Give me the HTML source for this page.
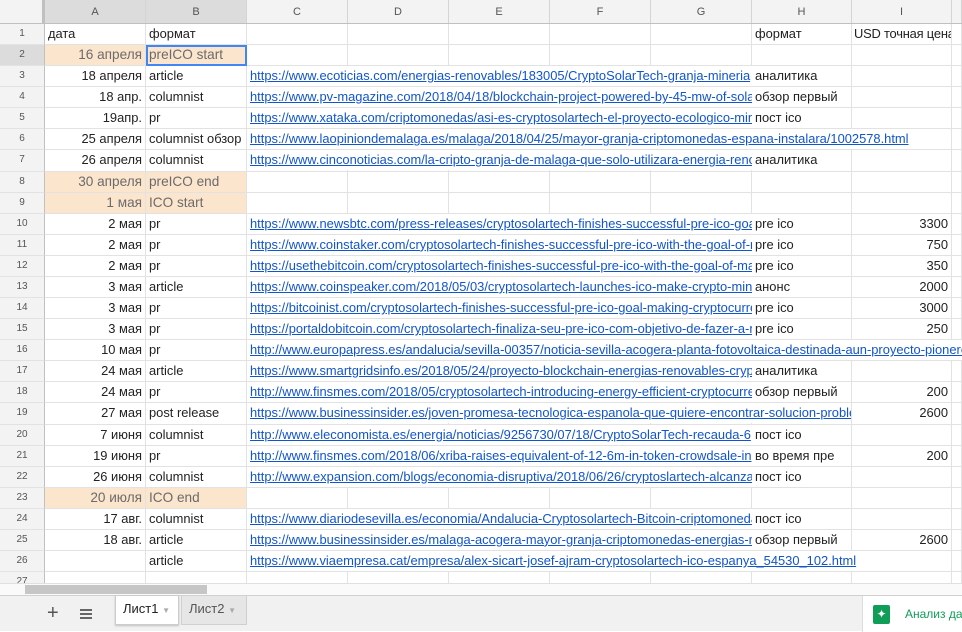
<!DOCTYPE html>
<html><head><meta charset="utf-8"><style>
*{box-sizing:border-box;margin:0;padding:0}
body{width:962px;height:631px;overflow:hidden;background:#fff;font-family:"Liberation Sans",Arial,sans-serif;font-size:12.9px;color:#222;position:relative}
.hdr{position:absolute;top:0;left:0;height:24px;width:962px;display:flex;background:#f3f3f3;border-bottom:1px solid #c0c0c0}
.hdr div{border-right:1px solid #d4d4d4;text-align:center;line-height:24px;font-size:11px;color:#555;flex:none}
.row{position:absolute;left:0;height:21.08px;width:962px;display:flex}
.row>div{flex:none;border-right:1px solid #e2e2e2;border-bottom:1px solid #e2e2e2;height:100%;line-height:20px;white-space:nowrap;overflow:hidden;padding:0 3px}
.rh{width:45px;background:#f3f3f3;text-align:center;font-size:10px;color:#555;border-right:1px solid #c0c0c0 !important}
.a{width:101px;text-align:right}.b{width:101px}.c{width:101px;position:relative;overflow:visible !important}
.d,.e,.f,.g{width:101px}.h{width:100px}.i{width:100px;text-align:right}.j{width:10px}
.o{background:#fce5cd;color:#6b6b6b;font-size:13.6px}
.lk{position:absolute;left:0;top:0;height:20px;background:#fff;color:#1155cc;text-decoration:underline;padding-left:3px;overflow:hidden;white-space:nowrap;z-index:2;line-height:20px}
.bar{position:absolute;left:0;top:595px;width:962px;height:36px;background:#f1f1f1;border-top:1px solid #d0d0d0}
</style></head><body>
<div class="hdr"><div style="width:45px;border-right:3px solid #c0c0c0"></div><div style="width:101px;background:#dcdcdc">A</div><div style="width:101px;background:#dcdcdc">B</div><div style="width:101px">C</div><div style="width:101px">D</div><div style="width:101px">E</div><div style="width:101px">F</div><div style="width:101px">G</div><div style="width:100px">H</div><div style="width:100px">I</div><div style="width:10px"></div></div>

<div class="row" style="top:24px"><div class="rh">1</div><div class="a" style="text-align:left">дата</div><div class="b">формат</div><div class="c"></div><div class="d"></div><div class="e"></div><div class="f"></div><div class="g"></div><div class="h">формат</div><div class="i" style="text-align:left;padding:0 0 0 2px;letter-spacing:-0.2px">USD точная цена</div><div class="j"></div></div>
<div class="row" style="top:45.08px"><div class="rh" style="background:#dcdcdc">2</div><div class="a o">16 апреля</div><div class="b o" style="outline:2px solid #4285f4;outline-offset:-2px">preICO start</div><div class="c"></div><div class="d"></div><div class="e"></div><div class="f"></div><div class="g"></div><div class="h"></div><div class="i"></div><div class="j"></div></div>
<div class="row" style="top:66.16px"><div class="rh">3</div><div class="a">18 апреля</div><div class="b">article</div><div class="c"><span class="lk" style="width:505px">https://www.ecoticias.com/energias-renovables/183005/CryptoSolarTech-granja-mineria</span></div><div class="d"></div><div class="e"></div><div class="f"></div><div class="g"></div><div class="h">аналитика</div><div class="i"></div><div class="j"></div></div>
<div class="row" style="top:87.24px"><div class="rh">4</div><div class="a">18 апр.</div><div class="b">columnist</div><div class="c"><span class="lk" style="width:505px">https://www.pv-magazine.com/2018/04/18/blockchain-project-powered-by-45-mw-of-solar</span></div><div class="d"></div><div class="e"></div><div class="f"></div><div class="g"></div><div class="h">обзор первый</div><div class="i"></div><div class="j"></div></div>
<div class="row" style="top:108.32px"><div class="rh">5</div><div class="a">19апр.</div><div class="b">pr</div><div class="c"><span class="lk" style="width:505px">https://www.xataka.com/criptomonedas/asi-es-cryptosolartech-el-proyecto-ecologico-minar</span></div><div class="d"></div><div class="e"></div><div class="f"></div><div class="g"></div><div class="h">пост ico</div><div class="i"></div><div class="j"></div></div>
<div class="row" style="top:129.4px"><div class="rh">6</div><div class="a">25 апреля</div><div class="b">columnist обзор</div><div class="c"><span class="lk" style="width:700px">https://www.laopiniondemalaga.es/malaga/2018/04/25/mayor-granja-criptomonedas-espana-instalara/1002578.html</span></div><div class="d"></div><div class="e"></div><div class="f"></div><div class="g"></div><div class="h"></div><div class="i"></div><div class="j"></div></div>
<div class="row" style="top:150.48px"><div class="rh">7</div><div class="a">26 апреля</div><div class="b">columnist</div><div class="c"><span class="lk" style="width:505px">https://www.cinconoticias.com/la-cripto-granja-de-malaga-que-solo-utilizara-energia-renovable</span></div><div class="d"></div><div class="e"></div><div class="f"></div><div class="g"></div><div class="h">аналитика</div><div class="i"></div><div class="j"></div></div>
<div class="row" style="top:171.56px"><div class="rh">8</div><div class="a o">30 апреля</div><div class="b o">preICO end</div><div class="c"></div><div class="d"></div><div class="e"></div><div class="f"></div><div class="g"></div><div class="h"></div><div class="i"></div><div class="j"></div></div>
<div class="row" style="top:192.64px"><div class="rh">9</div><div class="a o">1 мая</div><div class="b o">ICO start</div><div class="c"></div><div class="d"></div><div class="e"></div><div class="f"></div><div class="g"></div><div class="h"></div><div class="i"></div><div class="j"></div></div>
<div class="row" style="top:213.72px"><div class="rh">10</div><div class="a">2 мая</div><div class="b">pr</div><div class="c"><span class="lk" style="width:505px">https://www.newsbtc.com/press-releases/cryptosolartech-finishes-successful-pre-ico-goal</span></div><div class="d"></div><div class="e"></div><div class="f"></div><div class="g"></div><div class="h">pre ico</div><div class="i">3300</div><div class="j"></div></div>
<div class="row" style="top:234.8px"><div class="rh">11</div><div class="a">2 мая</div><div class="b">pr</div><div class="c"><span class="lk" style="width:505px">https://www.coinstaker.com/cryptosolartech-finishes-successful-pre-ico-with-the-goal-of-making</span></div><div class="d"></div><div class="e"></div><div class="f"></div><div class="g"></div><div class="h">pre ico</div><div class="i">750</div><div class="j"></div></div>
<div class="row" style="top:255.88px"><div class="rh">12</div><div class="a">2 мая</div><div class="b">pr</div><div class="c"><span class="lk" style="width:505px">https://usethebitcoin.com/cryptosolartech-finishes-successful-pre-ico-with-the-goal-of-making</span></div><div class="d"></div><div class="e"></div><div class="f"></div><div class="g"></div><div class="h">pre ico</div><div class="i">350</div><div class="j"></div></div>
<div class="row" style="top:276.96px"><div class="rh">13</div><div class="a">3 мая</div><div class="b">article</div><div class="c"><span class="lk" style="width:505px">https://www.coinspeaker.com/2018/05/03/cryptosolartech-launches-ico-make-crypto-mining</span></div><div class="d"></div><div class="e"></div><div class="f"></div><div class="g"></div><div class="h">анонс</div><div class="i">2000</div><div class="j"></div></div>
<div class="row" style="top:298.04px"><div class="rh">14</div><div class="a">3 мая</div><div class="b">pr</div><div class="c"><span class="lk" style="width:505px">https://bitcoinist.com/cryptosolartech-finishes-successful-pre-ico-goal-making-cryptocurrency</span></div><div class="d"></div><div class="e"></div><div class="f"></div><div class="g"></div><div class="h">pre ico</div><div class="i">3000</div><div class="j"></div></div>
<div class="row" style="top:319.12px"><div class="rh">15</div><div class="a">3 мая</div><div class="b">pr</div><div class="c"><span class="lk" style="width:505px">https://portaldobitcoin.com/cryptosolartech-finaliza-seu-pre-ico-com-objetivo-de-fazer-a-mineracao</span></div><div class="d"></div><div class="e"></div><div class="f"></div><div class="g"></div><div class="h">pre ico</div><div class="i">250</div><div class="j"></div></div>
<div class="row" style="top:340.2px"><div class="rh">16</div><div class="a">10 мая</div><div class="b">pr</div><div class="c"><span class="lk" style="width:715px">http://www.europapress.es/andalucia/sevilla-00357/noticia-sevilla-acogera-planta-fotovoltaica-destinada-aun-proyecto-pionero</span></div><div class="d"></div><div class="e"></div><div class="f"></div><div class="g"></div><div class="h"></div><div class="i"></div><div class="j"></div></div>
<div class="row" style="top:361.28px"><div class="rh">17</div><div class="a">24 мая</div><div class="b">article</div><div class="c"><span class="lk" style="width:505px">https://www.smartgridsinfo.es/2018/05/24/proyecto-blockchain-energias-renovables-cryptosolar</span></div><div class="d"></div><div class="e"></div><div class="f"></div><div class="g"></div><div class="h">аналитика</div><div class="i"></div><div class="j"></div></div>
<div class="row" style="top:382.36px"><div class="rh">18</div><div class="a">24 мая</div><div class="b">pr</div><div class="c"><span class="lk" style="width:505px">http://www.finsmes.com/2018/05/cryptosolartech-introducing-energy-efficient-cryptocurrency</span></div><div class="d"></div><div class="e"></div><div class="f"></div><div class="g"></div><div class="h">обзор первый</div><div class="i">200</div><div class="j"></div></div>
<div class="row" style="top:403.44px"><div class="rh">19</div><div class="a">27 мая</div><div class="b">post release</div><div class="c"><span class="lk" style="width:604px">https://www.businessinsider.es/joven-promesa-tecnologica-espanola-que-quiere-encontrar-solucion-problema</span></div><div class="d"></div><div class="e"></div><div class="f"></div><div class="g"></div><div class="h"></div><div class="i">2600</div><div class="j"></div></div>
<div class="row" style="top:424.52px"><div class="rh">20</div><div class="a">7 июня</div><div class="b">columnist</div><div class="c"><span class="lk" style="width:505px">http://www.eleconomista.es/energia/noticias/9256730/07/18/CryptoSolarTech-recauda-6</span></div><div class="d"></div><div class="e"></div><div class="f"></div><div class="g"></div><div class="h">пост ico</div><div class="i"></div><div class="j"></div></div>
<div class="row" style="top:445.6px"><div class="rh">21</div><div class="a">19 июня</div><div class="b">pr</div><div class="c"><span class="lk" style="width:505px">http://www.finsmes.com/2018/06/xriba-raises-equivalent-of-12-6m-in-token-crowdsale-in</span></div><div class="d"></div><div class="e"></div><div class="f"></div><div class="g"></div><div class="h">во время пре</div><div class="i">200</div><div class="j"></div></div>
<div class="row" style="top:466.68px"><div class="rh">22</div><div class="a">26 июня</div><div class="b">columnist</div><div class="c"><span class="lk" style="width:505px">http://www.expansion.com/blogs/economia-disruptiva/2018/06/26/cryptoslartech-alcanza</span></div><div class="d"></div><div class="e"></div><div class="f"></div><div class="g"></div><div class="h">пост ico</div><div class="i"></div><div class="j"></div></div>
<div class="row" style="top:487.76px"><div class="rh">23</div><div class="a o">20 июля</div><div class="b o">ICO end</div><div class="c"></div><div class="d"></div><div class="e"></div><div class="f"></div><div class="g"></div><div class="h"></div><div class="i"></div><div class="j"></div></div>
<div class="row" style="top:508.84px"><div class="rh">24</div><div class="a">17 авг.</div><div class="b">columnist</div><div class="c"><span class="lk" style="width:505px">https://www.diariodesevilla.es/economia/Andalucia-Cryptosolartech-Bitcoin-criptomonedas</span></div><div class="d"></div><div class="e"></div><div class="f"></div><div class="g"></div><div class="h">пост ico</div><div class="i"></div><div class="j"></div></div>
<div class="row" style="top:529.92px"><div class="rh">25</div><div class="a">18 авг.</div><div class="b">article</div><div class="c"><span class="lk" style="width:505px">https://www.businessinsider.es/malaga-acogera-mayor-granja-criptomonedas-energias-renovables</span></div><div class="d"></div><div class="e"></div><div class="f"></div><div class="g"></div><div class="h">обзор первый</div><div class="i">2600</div><div class="j"></div></div>
<div class="row" style="top:551px"><div class="rh">26</div><div class="a"></div><div class="b">article</div><div class="c"><span class="lk" style="width:700px">https://www.viaempresa.cat/empresa/alex-sicart-josef-ajram-cryptosolartech-ico-espanya_54530_102.html</span></div><div class="d"></div><div class="e"></div><div class="f"></div><div class="g"></div><div class="h"></div><div class="i"></div><div class="j"></div></div>
<div class="row" style="top:572.08px"><div class="rh">27</div><div class="a"></div><div class="b"></div><div class="c"></div><div class="d"></div><div class="e"></div><div class="f"></div><div class="g"></div><div class="h"></div><div class="i"></div><div class="j"></div></div>

<div style="position:absolute;left:0;top:583px;width:962px;height:12px;background:#fafafa;border-top:1px solid #e0e0e0"></div>
<div style="position:absolute;left:25px;top:585px;width:182px;height:9px;background:#c6c6c6"></div>
<div class="bar">
 <div style="position:absolute;left:47px;top:6px;font-size:20px;color:#555">+</div>
 <div style="position:absolute;left:80px;top:13px;width:12px;height:10px;border-top:2px solid #666;border-bottom:2px solid #666"><div style="margin-top:2px;height:2px;background:#666"></div></div>
 <div style="position:absolute;left:115px;top:0;width:64px;height:29px;background:#fff;border:1px solid #ccc;border-top:none;box-shadow:0 1px 2px rgba(0,0,0,.2);font-size:13px;line-height:25px;padding-left:7px;color:#222">Лист1 <span style="font-size:8px;color:#aaa">▼</span></div>
 <div style="position:absolute;left:181px;top:0;width:66px;height:29px;background:#e6e6e6;border:1px solid #d0d0d0;border-top:none;font-size:13px;line-height:25px;padding-left:7px;color:#555">Лист2 <span style="font-size:8px;color:#aaa">▼</span></div>
 <div style="position:absolute;left:862px;top:0;width:100px;height:36px;background:#fff;border-left:1px solid #ddd"></div>
 <div style="position:absolute;left:873px;top:9px;width:17px;height:19px;background:#0f9d58;border-radius:2px;color:#fff;font-size:12px;text-align:center;line-height:19px">✦</div>
 <div style="position:absolute;left:905px;top:11px;font-size:12px;color:#0f9d58;white-space:nowrap">Анализ да</div>
</div>
</body></html>
